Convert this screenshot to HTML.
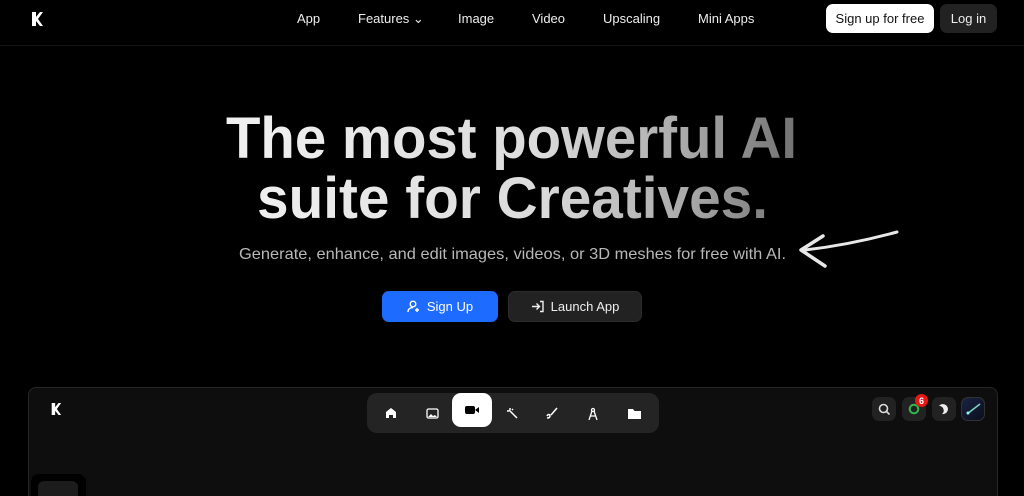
<!DOCTYPE html>
<html><head><meta charset="utf-8"><style>
*{margin:0;padding:0;box-sizing:border-box}
html,body{width:1024px;height:496px;overflow:hidden}
body{background:#000;font-family:"Liberation Sans",sans-serif;color:#fff;position:relative}
.nav{position:absolute;top:0;left:0;width:1024px;height:46px;border-bottom:1px solid #141414}
.nav a{position:absolute;top:11px;font-size:13px;color:#eee}
.btn{position:absolute;border-radius:7px;font-size:13px;display:flex;align-items:center;justify-content:center}
.panel{position:absolute;left:28px;top:387px;width:970px;height:120px;background:#0e0e0e;border:1px solid #262626;border-radius:8px}
.tb{position:absolute;left:367px;top:393px;width:292px;height:40px;background:#242424;border-radius:10px}
.ic{position:absolute;top:7px;width:26px;height:26px;display:flex;align-items:center;justify-content:center}
.rb{position:absolute;top:397px;width:24px;height:24px;border-radius:7px;background:#222;display:flex;align-items:center;justify-content:center}
</style></head><body>
<div class="nav">
<svg style="position:absolute;left:30px;top:11px" width="14" height="16" viewBox="0 0 14 16"><path d="M2 1h4v5l4-5h3l-5 7 5 7h-3l-4-5v5H2z" fill="#fff"/></svg>
<a style="left:297px">App</a>
<a style="left:358px">Features &#8964;</a>
<a style="left:458px">Image</a>
<a style="left:532px">Video</a>
<a style="left:603px">Upscaling</a>
<a style="left:698px">Mini Apps</a>
<div class="btn" style="left:826px;top:4px;width:108px;height:29px;background:#fff;color:#111">Sign up for free</div>
<div class="btn" style="left:940px;top:4px;width:57px;height:29px;background:#222;color:#eee">Log in</div>
</div>
<svg style="position:absolute;left:0;top:90px" width="1024" height="140">
<defs><linearGradient id="g" x1="220" x2="800" y1="0" y2="0" gradientUnits="userSpaceOnUse"><stop offset="0" stop-color="#f2f2f2"/><stop offset="0.55" stop-color="#dcdcdc"/><stop offset="0.8" stop-color="#aaa"/><stop offset="1" stop-color="#707070"/></linearGradient></defs>
<text x="226" y="68" font-family="Liberation Sans" font-weight="bold" font-size="58" fill="url(#g)" textLength="571" lengthAdjust="spacingAndGlyphs">The most powerful AI</text>
<text x="257" y="128" font-family="Liberation Sans" font-weight="bold" font-size="58" fill="url(#g)" textLength="511" lengthAdjust="spacingAndGlyphs">suite for Creatives.</text>
</svg>
<svg style="position:absolute;left:0;top:240px" width="1024" height="30"><text x="239" y="19" font-family="Liberation Sans" font-size="16" fill="#b8b8b8" textLength="547" lengthAdjust="spacingAndGlyphs">Generate, enhance, and edit images, videos, or 3D meshes for free with AI.</text></svg>
<svg style="position:absolute;left:795px;top:228px" width="105" height="45" viewBox="0 0 105 45"><path d="M102 4 C80 10 45 18 10 22" stroke="#e8e8e8" stroke-width="3" fill="none" stroke-linecap="round"/><path d="M28 8 L6 22 L30 38" stroke="#e8e8e8" stroke-width="3.5" fill="none" stroke-linecap="round" stroke-linejoin="round"/></svg>
<div class="btn" style="left:382px;top:291px;width:116px;height:31px;background:#1e6bff;color:#fff;gap:7px"><svg width="13" height="13" viewBox="0 0 13 13" fill="none" stroke="#fff" stroke-width="1.4"><circle cx="6" cy="4" r="2.8"/><path d="M1 12c0-3 2-4.5 5-4.5M10 8v4M8 10h4"/></svg>Sign Up</div>
<div class="btn" style="left:508px;top:291px;width:134px;height:31px;background:#222;color:#eee;gap:7px;border:1px solid #2c2c2c"><svg width="13" height="13" viewBox="0 0 13 13" fill="none" stroke="#eee" stroke-width="1.4"><path d="M1 6.5h7M5.5 3.5l3 3-3 3M9 1.5h3v10H9"/></svg>Launch App</div>
<div class="panel"></div>
<svg style="position:absolute;left:50px;top:402px" width="12" height="14" viewBox="0 0 14 16"><path d="M2 1h4v5l4-5h3l-5 7 5 7h-3l-4-5v5H2z" fill="#fff"/></svg>
<div style="position:absolute;left:31px;top:474px;width:55px;height:30px;background:#000;border-radius:8px"></div>
<div style="position:absolute;left:38px;top:481px;width:40px;height:30px;background:#1c1c1c;border-radius:6px"></div>
<div class="tb">
<div class="ic" style="left:11px"><svg width="12" height="12"><path d="M1 11V5l5-4 5 4v6H8V8H4v3z" fill="#fff"/></svg></div>
<div class="ic" style="left:52px"><svg width="13" height="11"><rect x="1" y="1" width="11" height="9" rx="1.5" fill="none" stroke="#fff" stroke-width="1.3"/><path d="M2 9l3-3 2 2 2-1 2 2z" fill="#fff"/></svg></div>
<div style="position:absolute;left:85px;top:0;width:40px;height:34px;background:#fff;border-radius:9px;display:flex;align-items:center;justify-content:center"><svg width="14" height="10"><rect x="0" y="1" width="10" height="8" rx="2" fill="#000"/><path d="M10 5l4-3v6z" fill="#000"/></svg></div>
<div class="ic" style="left:132px"><svg width="12" height="12" stroke="#fff" stroke-width="1.5"><path d="M3 3l8 8M1 4h2M4 1v2M6 2l1 1"/></svg></div>
<div class="ic" style="left:172px"><svg width="12" height="12" stroke="#fff" stroke-width="1.5" fill="none"><path d="M11 1L5 8M1 9c1-2 3-2 3 0s-2 2-3 2"/></svg></div>
<div class="ic" style="left:213px"><svg width="10" height="13" stroke="#fff" stroke-width="1.3" fill="none"><circle cx="5" cy="3" r="1.5"/><path d="M4 4l-3 9M6 4l3 9M2 9h6"/></svg></div>
<div class="ic" style="left:254px"><svg width="13" height="11"><path d="M0 1h5l1.5 2H13v8H0z" fill="#fff"/></svg></div>
</div>
<div class="rb" style="left:872px"><svg width="12" height="12" fill="none" stroke="#ddd" stroke-width="1.6"><circle cx="5.5" cy="5.5" r="4"/><path d="M8.5 8.5l3 3"/></svg></div>
<div class="rb" style="left:902px"><svg width="12" height="12" fill="none" stroke="#2fb84a" stroke-width="2"><circle cx="6" cy="6" r="4.3"/></svg></div>
<div style="position:absolute;left:915px;top:394px;width:13px;height:13px;border-radius:50%;background:#e81818;color:#fff;font-size:9px;display:flex;align-items:center;justify-content:center;font-weight:bold">6</div>
<div class="rb" style="left:932px"><svg width="12" height="12"><path d="M8 1a5 5 0 1 0 3 8A4.5 4.5 0 0 1 8 1z" fill="#eee" transform="rotate(180 6 6)"/></svg></div>
<div class="rb" style="left:961px;background:linear-gradient(135deg,#1a2240,#0a0f1f);border:1px solid #333"><svg width="18" height="18"><path d="M3 14L16 4" stroke="#7fd4c0" stroke-width="1.5"/><circle cx="4" cy="13" r="1.5" fill="#8fe"/></svg></div>
</body></html>
